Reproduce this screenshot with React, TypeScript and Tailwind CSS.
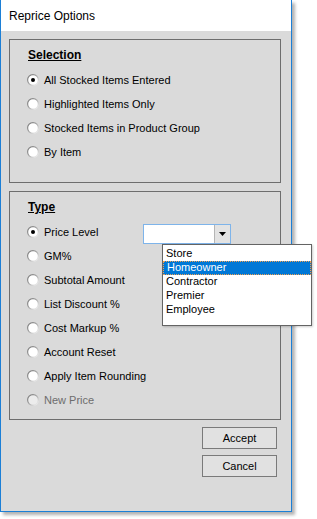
import React from 'react';

const Radio: React.FC<{ checked?: boolean; disabled?: boolean }> = ({ checked, disabled }) => (
  <svg width="12" height="12" viewBox="0 0 12 12" className="shrink-0">
    <defs>
      <linearGradient id="rg" x1="0" y1="0" x2="1" y2="1">
        <stop offset="0" stopColor="#6f6f6f" />
        <stop offset="0.5" stopColor="#a8a8a8" />
        <stop offset="1" stopColor="#ffffff" />
      </linearGradient>
    </defs>
    <circle cx="6" cy="6" r="5.4" fill={disabled ? '#ececec' : '#ffffff'} stroke="url(#rg)" strokeWidth="1.2" />
    {checked && <circle cx="6" cy="6" r="2" fill="#000000" />}
  </svg>
);

const Row: React.FC<{ label: string; checked?: boolean; disabled?: boolean; children?: React.ReactNode }> = ({
  label,
  checked,
  disabled,
  children,
}) => (
  <div className="h-[24px] flex items-center">
    <Radio checked={checked} disabled={disabled} />
    <span className={`ml-[5px] ${children ? 'w-[99px] shrink-0' : ''} ${disabled ? 'text-[#6d6d6d]' : 'text-black'}`}>
      {label}
    </span>
    {children}
  </div>
);

export default function App() {
  const levels = ['Store', 'Homeowner', 'Contractor', 'Premier', 'Employee'];

  return (
    <div className="w-[317px] h-[519px] bg-white text-[11px] leading-none font-['Liberation_Sans',Arial,sans-serif]">
      <div className="relative w-[292px] h-[512px] border-l border-r border-b border-[#1c7fd6] bg-[#dadada] shadow-[3px_3px_3px_rgba(0,0,0,0.3)] flex flex-col">
        {/* Title bar */}
        <div className="h-[31px] bg-white flex items-center pl-[8px] text-[12px] text-black shrink-0">Reprice Options</div>

        <div className="pl-[8px] pt-[8px] pr-[10px] flex flex-col">
          {/* Selection */}
          <div className="h-[144px] border border-[#6e6e6e] pl-[17px] pt-[7px] flex flex-col">
            <div className="h-[16px] flex items-center pl-[1px] text-[12px] font-bold underline text-black">Selection</div>
            <div className="mt-[5px] flex flex-col">
              <Row label="All Stocked Items Entered" checked />
              <Row label="Highlighted Items Only" />
              <Row label="Stocked Items in Product Group" />
              <Row label="By Item" />
            </div>
          </div>

          {/* Type */}
          <div className="mt-[8px] h-[229px] border border-[#6e6e6e] pl-[17px] pt-[7px] flex flex-col">
            <div className="h-[16px] flex items-center pl-[1px] text-[12px] font-bold underline text-black">Type</div>
            <div className="mt-[5px] flex flex-col">
              <Row label="Price Level" checked>
                <div className="relative mt-[3px] w-[88px] h-[20px] border border-[#7eb4ea] bg-white flex">
                  <div className="flex-1" />
                  <div className="w-[16px] border-l border-[#b5b5b5] bg-[#e3e3e3] flex items-center justify-center">
                    <svg width="7" height="4" viewBox="0 0 7 4">
                      <path d="M0 0 H7 L3.5 4 Z" fill="#000" />
                    </svg>
                  </div>
                  {/* Open dropdown list */}
                  <div className="absolute left-[18px] top-[19px] w-[150px] h-[82px] border border-[#646464] bg-white pt-[2px] z-10 shadow-[1px_1px_2px_rgba(0,0,0,0.2)]">
                    {levels.map((lv) => (
                      <div
                        key={lv}
                        className={`h-[14px] flex items-center pl-[3px] ${
                          lv === 'Homeowner'
                            ? 'bg-[#0078d7] text-white border border-dotted border-[#f0a050] pl-[2px]'
                            : 'text-black'
                        }`}
                      >
                        {lv}
                      </div>
                    ))}
                  </div>
                </div>
              </Row>
              <Row label="GM%" />
              <Row label="Subtotal Amount" />
              <Row label="List Discount %" />
              <Row label="Cost Markup %" />
              <Row label="Account Reset" />
              <Row label="Apply Item Rounding" />
              <Row label="New Price" disabled />
            </div>
          </div>

          {/* Buttons */}
          <div className="mt-[7px] flex flex-col items-end pr-[4px] gap-[6px]">
            <button className="w-[75px] h-[22px] border border-[#7a7a7a] bg-[#e1e1e1] text-black text-[11px]">Accept</button>
            <button className="w-[75px] h-[22px] border border-[#7a7a7a] bg-[#e1e1e1] text-black text-[11px]">Cancel</button>
          </div>
        </div>
      </div>
    </div>
  );
}
